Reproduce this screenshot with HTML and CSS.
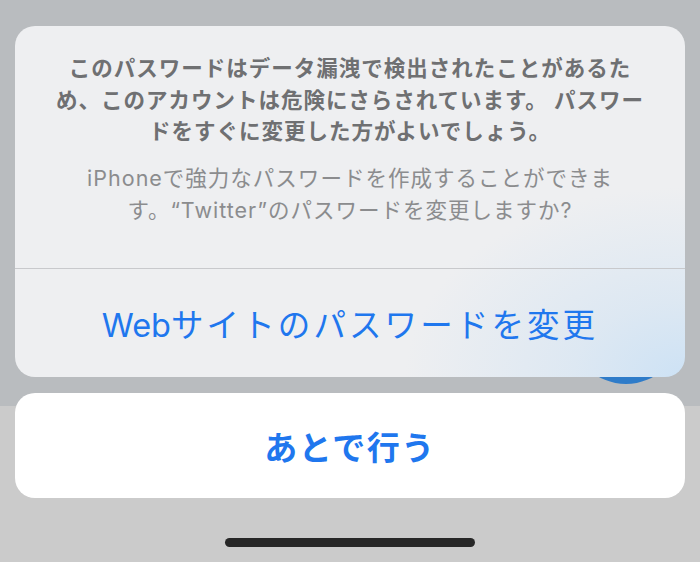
FILE: index.html
```html
<!DOCTYPE html>
<html lang="ja">
<head>
<meta charset="utf-8">
<title>パスワード</title>
<link rel="stylesheet" href="styles.css">
</head>
<body>
<div class="screen">
  <div class="fab"></div>
  <div class="sheet">
    <div class="message">
      <p class="title">このパスワードはデータ漏洩で検出されたことがあるた<br>め、このアカウントは危険にさらされています。 パスワー<br>ドをすぐに変更した方がよいでしょう。</p>
      <p class="detail">iPhoneで強力なパスワードを作成することができま<br>す。“Twitter”のパスワードを変更しますか?</p>
    </div>
    <button class="action"><span class="latin">Web</span>サイトのパスワードを変更</button>
  </div>
  <button class="cancel">あとで行う</button>
  <div class="home-bar"></div>
</div>
</body>
</html>
```
FILE: styles.css
```css
html, body {
  margin: 0;
  height: 562px;
  overflow: hidden;
}
body {
  background: linear-gradient(to bottom, #b9bcbf 0, #b9bcbf 406px, #cbcbcb 406px, #cbcbcb 100%);
  font-family: Inter, "Noto Sans CJK JP", sans-serif;
}
.screen {
  position: relative;
  display: flex;
  flex-direction: column;
  padding: 26px 15px 0;
}
.fab {
  position: absolute;
  left: 571px;
  top: 274px;
  width: 110px;
  height: 110px;
  border-radius: 50%;
  background: #2f7cc9;
  z-index: 0;
}
.sheet {
  position: relative;
  z-index: 1;
  height: 351px;
  border-radius: 20px;
  overflow: hidden;
  display: flex;
  flex-direction: column;
  background:
    radial-gradient(ellipse 280px 190px at 100% 100%, rgba(205, 226, 245, 1) 0%, rgba(214, 229, 243, 0.7) 40%, rgba(238, 239, 241, 0) 100%),
    #eeeff1;
}
.message {
  padding: 27px 16px 0;
  height: 243px;
  box-sizing: border-box;
  border-bottom: 1px solid #c8c9cc;
  text-align: center;
}
.title {
  margin: 0;
  font-size: 21.5px;
  letter-spacing: 1px;
  line-height: 31.5px;
  font-weight: 700;
  color: #6f7072;
}
.detail {
  margin: 14px 0 0;
  font-size: 21.5px;
  letter-spacing: 1px;
  line-height: 32px;
  font-weight: 400;
  color: #8b8c8e;
}
.action {
  flex: 1;
  border: 0;
  background: transparent;
  font-family: inherit;
  font-size: 32.5px;
  letter-spacing: 3.1px;
  color: #1f77ee;
  padding: 0 0 2px;
}
.latin {
  letter-spacing: 0;
}
.cancel {
  margin-top: 16px;
  height: 105px;
  border: 0;
  border-radius: 20px;
  background: #ffffff;
  font-family: inherit;
  font-size: 33px;
  font-weight: 700;
  letter-spacing: 1.5px;
  color: #1f77ee;
}
.home-bar {
  align-self: center;
  margin-top: 40px;
  width: 250px;
  height: 9px;
  border-radius: 5px;
  background: #272727;
}
```
